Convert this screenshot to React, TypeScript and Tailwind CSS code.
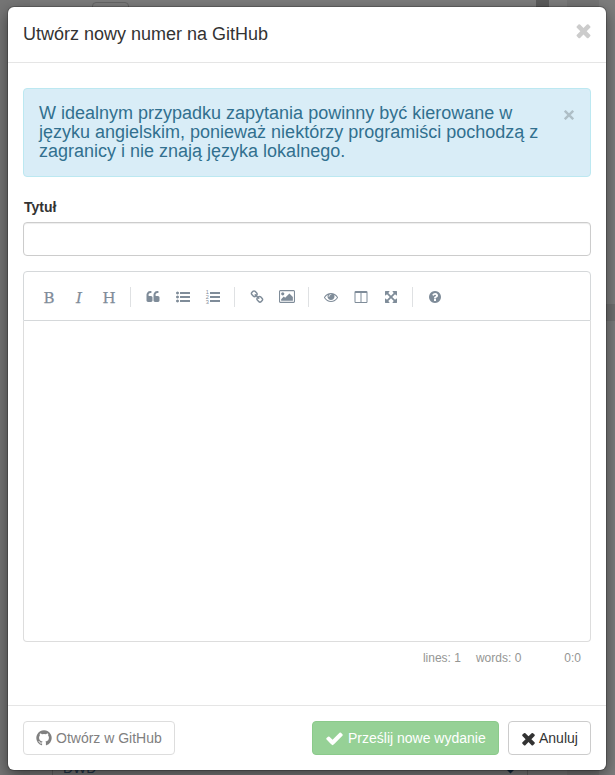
import type { ReactNode } from 'react';

const icons = {
  check:
    'M1671 566q0 40-28 68l-724 724-136 136q-28 28-68 28t-68-28l-136-136-362-362q-28-28-28-68t28-68l136-136q28-28 68-28t68 28l294 295 656-657q28-28 68-28t68 28l136 136q28 28 28 68z',
  times:
    'M1490 1322q0 40-28 68l-136 136q-28 28-68 28t-68-28l-294-294-294 294q-28 28-68 28t-68-28l-136-136q-28-28-28-68t28-68l294-294-294-294q-28-28-28-68t28-68l136-136q28-28 68-28t68 28l294 294 294-294q28-28 68-28t68 28l136 136q28 28 28 68t-28 68l-294 294 294 294q28 28 28 68z',
  quote:
    'M832 960v384q0 80-56 136t-136 56h-384q-80 0-136-56t-56-136v-704q0-104 40.5-198.5t109.5-163.5 163.5-109.5 198.5-40.5h64q26 0 45 19t19 45v128q0 26-19 45t-45 19h-64q-106 0-181 75t-75 181v32q0 40 28 68t68 28h224q80 0 136 56t56 136zm896 0v384q0 80-56 136t-136 56h-384q-80 0-136-56t-56-136v-704q0-104 40.5-198.5t109.5-163.5 163.5-109.5 198.5-40.5h64q26 0 45 19t19 45v128q0 26-19 45t-45 19h-64q-106 0-181 75t-75 181v32q0 40 28 68t68 28h224q80 0 136 56t56 136z',
  list:
    'M384 1408q0 80-56 136t-136 56-136-56-56-136 56-136 136-56 136 56 56 136zm0-512q0 80-56 136t-136 56-136-56-56-136 56-136 136-56 136 56 56 136zm0-512q0 80-56 136t-136 56-136-56-56-136 56-136 136-56 136 56 56 136zM544 1280h1216q32 0 32 32v192q0 32-32 32h-1216q-32 0-32-32v-192q0-32 32-32zM544 768h1216q32 0 32 32v192q0 32-32 32h-1216q-32 0-32-32v-192q0-32 32-32zM544 256h1216q32 0 32 32v192q0 32-32 32h-1216q-32 0-32-32v-192q0-32 32-32z',
  link:
    'M1520 1216q0-40-28-68l-208-208q-28-28-68-28-42 0-72 32 3 3 19 18.5t21.5 21.5 15 19 13 25.5 3.5 27.5q0 40-28 68t-68 28q-15 0-27.5-3.5t-25.5-13-19-15-21.5-21.5-18.5-19q-33 31-33 73 0 40 28 68l206 207q27 27 68 27 40 0 68-26l147-146q28-28 28-67zm-703-705q0-40-28-68l-206-207q-28-28-68-28-39 0-68 27l-147 146q-28 28-28 67 0 40 28 68l208 208q27 27 68 27 42 0 72-31-3-3-19-18.5t-21.5-21.5-15-19-13-25.5-3.5-27.5q0-40 28-68t68-28q15 0 27.5 3.5t25.5 13 19 15 21.5 21.5 18.5 19q33-31 33-73zm895 705q0 120-85 203l-147 146q-83 83-203 83-121 0-204-85l-206-207q-83-83-83-203 0-123 88-209l-88-88q-86 88-208 88-120 0-204-84l-208-208q-84-84-84-204t85-203l147-146q83-83 203-83 121 0 204 85l206 207q83 83 83 203 0 123-88 209l88 88q86-88 208-88 120 0 204 84l208 208q84 84 84 204z',
  image:
    'M576 576q0 80-56 136t-136 56-136-56-56-136 56-136 136-56 136 56 56 136zm1024 384v448h-1408v-192l320-320 160 160 512-512zm96-704h-1600q-13 0-22.5 9.5t-9.5 22.5v1216q0 13 9.5 22.5t22.5 9.5h1600q13 0 22.5-9.5t9.5-22.5v-1216q0-13-9.5-22.5t-22.5-9.5zm160 32v1216q0 66-47 113t-113 47h-1600q-66 0-113-47t-47-113v-1216q0-66 47-113t113-47h1600q66 0 113 47t47 113z',
  eye:
    'M1664 960q-152-236-381-353 61 104 61 225 0 185-131.5 316.5t-316.5 131.5-316.5-131.5-131.5-316.5q0-121 61-225-229 117-381 353 133 205 333.5 326.5t434.5 121.5 434.5-121.5 333.5-326.5zm-720-384q0-20-14-34t-34-14q-125 0-214.5 89.5t-89.5 214.5q0 20 14 34t34 14 34-14 14-34q0-86 61-147t147-61q20 0 34-14t14-34zm848 384q0 34-20 69-140 230-376.5 368.5t-499.5 138.5-499.5-139-376.5-368q-20-35-20-69t20-69q140-229 376.5-368t499.5-139 499.5 139 376.5 368q20 35 20 69z',
  columns:
    'M224 1536h608v-1152h-640v1120q0 13 9.5 22.5t22.5 9.5zm1376-32v-1120h-640v1152h608q13 0 22.5-9.5t9.5-22.5zm128-1216v1216q0 66-47 113t-113 47h-1344q-66 0-113-47t-47-113v-1216q0-66 47-113t113-47h1344q66 0 113 47t47 113z',
  arrows:
    'M1411 541l-355 355 355 355 144-144q29-31 70-14 39 17 39 59v448q0 26-19 45t-45 19h-448q-42 0-59-40-17-39 14-69l144-144-355-355-355 355 144 144q31 30 14 69-17 40-59 40h-448q-26 0-45-19t-19-45v-448q0-42 40-59 39-17 69 14l144 144 355-355-355-355-144 144q-19 19-45 19-12 0-24-5-40-17-40-59v-448q0-26 19-45t45-19h448q42 0 59 40 17 39-14 69l-144 144 355 355 355-355-144-144q-31-30-14-69 17-40 59-40h448q26 0 45 19t19 45v448q0 42-39 59-13 5-25 5-26 0-45-19z',
  question:
    'M1024 1376v-192q0-14-9-23t-23-9h-192q-14 0-23 9t-9 23v192q0 14 9 23t23 9h192q14 0 23-9t9-23zm256-672q0-88-55.5-163t-138.5-116-170-41q-243 0-371 213-15 24 8 42l132 100q7 6 19 6 16 0 25-12 53-68 86-92 34-24 86-24 48 0 85.5 26t37.5 59q0 38-20 61t-68 45q-63 28-115.5 86.5t-52.5 125.5v36q0 14 9 23t23 9h192q14 0 23-9t9-23q0-19 21.5-49.5t54.5-49.5q32-18 49-28.5t46-35 44.5-48 28-60.5 12.5-81zm384 192q0 209-103 385.5t-279.5 279.5-385.5 103-385.5-103-279.5-279.5-103-385.5 103-385.5 279.5-279.5 385.5-103 385.5 103 279.5 279.5 103 385.5z',
  github:
    'M896 128q209 0 385.5 103t279.5 279.5 103 385.5q0 251-146.5 451.5t-378.5 277.5q-27 5-40-7t-13-30q0-3 .5-76.5t.5-134.5q0-97-52-142 57-6 102.5-18t94-39 81-66.5 53-105 20.5-150.5q0-119-79-206 37-91-8-204-28-9-81 11t-92 44l-38 24q-93-26-192-26t-192 26q-16-11-42.5-27t-83.5-38.5-85-13.5q-45 113-8 204-79 87-79 206 0 85 20.5 150t52.5 105 80.5 67 94 39 102.5 18q-39 36-49 103-21 10-45 15t-57 5-65.5-21.5-55.5-62.5q-19-32-48.5-52t-49.5-24l-20-3q-21 0-29 4.5t-5 11.5 9 14 13 12l7 5q22 10 43.5 38t31.5 51l10 23q13 38 44 61.5t67 30 69.5 7 55.5-3.5l23-4q0 38 .5 88.5t.5 54.5q0 18-13 30t-40 7q-232-77-378.5-277.5t-146.5-451.5q0-209 103-385.5t279.5-279.5 385.5-103z',
};

function Icon({ name, className, viewBox = '0 0 1792 1792' }: { name: keyof typeof icons; className: string; viewBox?: string }) {
  return (
    <svg viewBox={viewBox} fill="currentColor" className={`shrink-0 ${className}`} aria-hidden="true">
      <path d={icons[name]} />
    </svg>
  );
}

function NumberedListIcon() {
  return (
    <svg viewBox="0 0 14 14" fill="currentColor" className="size-[14px] shrink-0 overflow-visible font-['Liberation_Sans',sans-serif]" aria-hidden="true">
      <path d="M4 2h10v2H4zM4 6h10v2H4zM4 10h10v2H4z" />
      <text x="-0.3" y="3.9" fontSize="5.6">1</text>
      <text x="-0.3" y="8.9" fontSize="5.6">2</text>
      <text x="-0.3" y="13.9" fontSize="5.6">3</text>
    </svg>
  );
}

function Tool({ children }: { children: ReactNode }) {
  return <button className="flex h-[30px] w-[30px] items-center justify-center">{children}</button>;
}

function Letter({ children, className = '' }: { children: string; className?: string }) {
  return (
    <span className={`pt-[2px] font-['DejaVu_Serif',serif] text-[15px] leading-5 [-webkit-text-stroke:0.25px_currentColor] ${className}`}>
      {children}
    </span>
  );
}

function Separator() {
  return <i className="mr-[7px] ml-[6px] h-5 w-px bg-[#dfe1e3]" />;
}

function Backdrop() {
  return (
    <div className="absolute inset-0 bg-[#7d7d7d]">
      <div className="absolute inset-y-0 left-0 w-[30px] bg-[#757575]" />
      <div className="absolute top-[2px] left-[92px] h-5 w-[37px] rounded border border-[#666]" />
      <div className="absolute top-0 left-[536px] h-5 w-[13px] bg-[#5c5c5c]" />
      <div className="absolute inset-y-0 left-[567px] w-8 bg-[#757575]" />
      <div className="absolute top-[304px] right-0 h-[17px] w-5 bg-[#707070]" />
      <div className="absolute top-[760px] left-[52px] h-5 w-[476px] border-x border-[#666]" />
      <div className="absolute top-[759px] left-[63px] text-sm leading-[18px] text-[#23384d]">DWD</div>
      <div className="absolute top-[765px] left-[507px] size-[7px] rotate-45 bg-[#152b42]" />
    </div>
  );
}

export default function App() {
  return (
    <div className="relative h-[775px] w-[615px] overflow-hidden px-2 pt-[7px] font-['Liberation_Sans',Arial,sans-serif] text-sm text-[#333]">
      <Backdrop />
      <div className="relative flex h-[763px] w-[598px] flex-col rounded-md bg-white shadow-[0_5px_15px_rgba(0,0,0,0.5),0_0_0_1px_rgba(0,0,0,0.2)]">
        <header className="flex h-14 shrink-0 items-start justify-between border-b border-[#e5e5e5] px-[15px]">
          <h4 className="pt-[17px] text-lg leading-5">Utwórz nowy numer na GitHub</h4>
          <button className="mt-[13px] -mr-[2.5px] text-[#ccc]">
            <Icon name="times" className="size-[21px]" />
          </button>
        </header>

        <main className="grow px-[15px] pt-[25px]">
          <div className="flex h-[89px] items-start justify-between rounded border border-[#bce8f1] bg-[#d9edf7] px-[15px] pt-[15px] text-[#31708f]">
            <p className="w-[510px] text-lg leading-[19px]">
              W idealnym przypadku zapytania powinny być kierowane w języku angielskim, ponieważ niektórzy programiści pochodzą z zagranicy i nie znają języka lokalnego.
            </p>
            <button className="mt-[6px] mr-[1px] text-[#aebec6]">
              <svg viewBox="0 0 10 10" stroke="currentColor" strokeWidth="2.4" className="size-[10px]" aria-hidden="true">
                <path d="M0.8 0.8L9.2 9.2M9.2 0.8L0.8 9.2" />
              </svg>
            </button>
          </div>

          <label className="mt-5 block pl-px leading-5 font-bold">Tytuł</label>
          <input className="mt-[5px] block h-[34px] w-full rounded border border-[#ccc] px-3 shadow-[inset_0_1px_1px_rgba(0,0,0,0.075)]" />

          <div className="mt-[15px] flex h-[50px] items-center rounded-t border border-[#d5d8da] pt-px pl-[10px] text-[#7f8c99]">
            <Tool><Letter>B</Letter></Tool>
            <Tool><Letter className="italic">I</Letter></Tool>
            <Tool><Letter>H</Letter></Tool>
            <Separator />
            <Tool><Icon name="quote" className="size-[14px]" /></Tool>
            <Tool><Icon name="list" className="size-[14px]" /></Tool>
            <Tool><NumberedListIcon /></Tool>
            <Separator />
            <Tool><Icon name="link" className="size-[14px]" /></Tool>
            <Tool><Icon name="image" viewBox="-64 0 1920 1792" className="h-[15px] w-4" /></Tool>
            <Separator />
            <Tool><Icon name="eye" className="size-[14px]" /></Tool>
            <Tool><Icon name="columns" className="size-[14px]" /></Tool>
            <Tool><Icon name="arrows" className="size-[14px]" /></Tool>
            <Separator />
            <Tool><Icon name="question" className="size-[14px]" /></Tool>
          </div>
          <div className="h-[321px] rounded-b border border-t-0 border-[#ddd]" />
          <div className="flex justify-end pt-2 pr-[10px] text-xs leading-4 text-[#959694]">
            <span>lines: 1</span>
            <span className="ml-[15px]">words: 0</span>
            <span className="ml-[43px]">0:0</span>
          </div>
        </main>

        <footer className="flex h-[65px] shrink-0 items-start border-t border-[#e5e5e5] px-[15px] pt-[15px]">
          <button className="flex h-[34px] w-[152px] items-center rounded border border-[#ddd] pl-[11px] text-[#808080]">
            <Icon name="github" className="mr-[3px] size-[18px]" />
            Otwórz w GitHub
          </button>
          <button className="ml-auto flex h-[34px] w-[187px] items-center rounded border border-[#8bca8b] bg-[#96d196] pl-3 text-white">
            <Icon name="check" className="mr-1 size-[19px]" />
            Prześlij nowe wydanie
          </button>
          <button className="ml-[9px] flex h-[34px] w-[83px] items-center rounded border border-[#ccc] pl-[10px]">
            <Icon name="times" className="mr-px size-[19px]" />
            Anuluj
          </button>
        </footer>
      </div>
    </div>
  );
}
